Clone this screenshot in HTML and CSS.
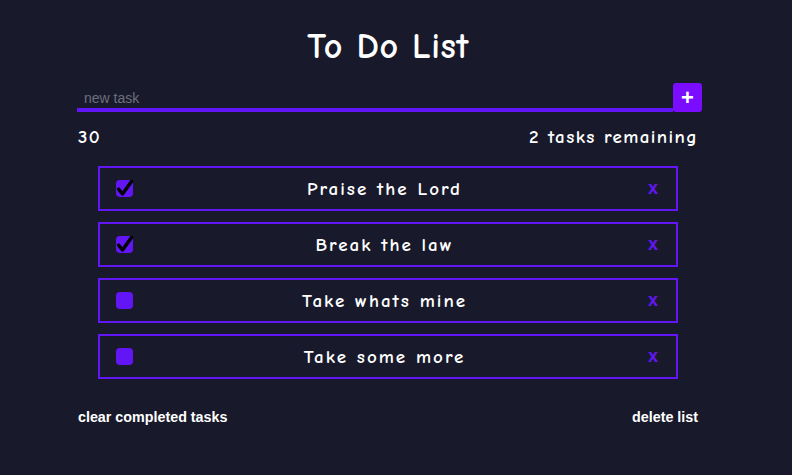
FILE: index.html
```html
<!DOCTYPE html>
<html>
<head>
<meta charset="utf-8">
<link rel="stylesheet" href="styles.css">
</head>
<body>
<div class="app">
  <h1 class="title">To Do List</h1>
  <form class="new-task">
    <input class="new-input" type="text" placeholder="new task">
    <button class="add-btn" type="button">+</button>
  </form>
  <div class="status">
    <span>30</span>
    <span>2 tasks remaining</span>
  </div>
  <ul class="tasks">
    <li class="task">
      <span class="check checked"><svg viewBox="0 0 17 17" width="17" height="17"><path d="M2.5 9 L6.5 14 L15.5 1.5" fill="none" stroke="#000" stroke-width="3.5" stroke-linecap="round" stroke-linejoin="round"/></svg></span>
      <span class="task-name">Praise the Lord</span>
      <span class="del">x</span>
    </li>
    <li class="task">
      <span class="check checked"><svg viewBox="0 0 17 17" width="17" height="17"><path d="M2.5 9 L6.5 14 L15.5 1.5" fill="none" stroke="#000" stroke-width="3.5" stroke-linecap="round" stroke-linejoin="round"/></svg></span>
      <span class="task-name">Break the law</span>
      <span class="del">x</span>
    </li>
    <li class="task">
      <span class="check"></span>
      <span class="task-name">Take whats mine</span>
      <span class="del">x</span>
    </li>
    <li class="task">
      <span class="check"></span>
      <span class="task-name">Take some more</span>
      <span class="del">x</span>
    </li>
  </ul>
  <div class="footer">
    <button class="link-btn" type="button">clear completed tasks</button>
    <button class="link-btn" type="button">delete list</button>
  </div>
</div>
</body>
</html>
```
FILE: styles.css
```css
html, body {
  margin: 0;
  padding: 0;
  background: #181a2b;
  color: #fff;
}
body {
  font-family: "Comic Sans MS", "Comic Neue", "DejaVu Sans", sans-serif;
}
.app {
  width: 620px;
  margin-left: 78px;
  padding-top: 27px;
}
.title {
  margin: 0;
  text-align: center;
  font-size: 36px;
  line-height: 40px;
  font-weight: bold;
  letter-spacing: 0.6px;
}
.new-task {
  display: flex;
  margin: 18px 0 0 -1px;
  height: 27px;
  align-items: stretch;
}
.new-input {
  flex: 0 0 596px;
  box-sizing: border-box;
  background: transparent;
  border: none;
  border-bottom: 4px solid #6316f5;
  color: #fff;
  font-family: "Liberation Sans", Arial, sans-serif;
  font-size: 14px;
  padding: 2px 0 0 7px;
  outline: none;
}
.new-input::placeholder {
  color: #6c6f7d;
}
.add-btn {
  flex: 0 0 29px;
  background: #7a0cff;
  border: none;
  border-radius: 3px;
  color: #fff;
  font-family: "Liberation Sans", Arial, sans-serif;
  font-size: 22px;
  font-weight: bold;
  line-height: 24px;
  padding: 0;
  margin-top: -2px;
}
.status {
  display: flex;
  justify-content: space-between;
  margin-top: 14px;
  font-size: 19px;
  line-height: 22px;
  font-weight: bold;
  letter-spacing: 1.4px;
}
.tasks {
  list-style: none;
  margin: 18px 20px 0;
  padding: 0;
  display: flex;
  flex-direction: column;
  gap: 11px;
}
.task {
  height: 45px;
  box-sizing: border-box;
  border: 2px solid #6316f5;
  display: flex;
  align-items: center;
  padding: 0 18px 0 16px;
}
.check {
  width: 17px;
  height: 17px;
  border-radius: 4px;
  background: #6316f5;
  display: block;
  flex: 0 0 17px;
}
.check svg {
  display: block;
  overflow: visible;
}
.task-name {
  flex: 1;
  text-align: center;
  font-size: 19px;
  font-weight: bold;
  letter-spacing: 2px;
  padding-right: 12px;
}
.del {
  color: #6316f5;
  font-size: 18px;
  font-weight: bold;
  font-family: "Liberation Sans", Arial, sans-serif;
}
.footer {
  display: flex;
  justify-content: space-between;
  margin-top: 30px;
}
.link-btn {
  background: none;
  border: none;
  padding: 0;
  color: #fff;
  font-family: "Liberation Sans", Arial, sans-serif;
  font-size: 14.3px;
  font-weight: bold;
}
```
